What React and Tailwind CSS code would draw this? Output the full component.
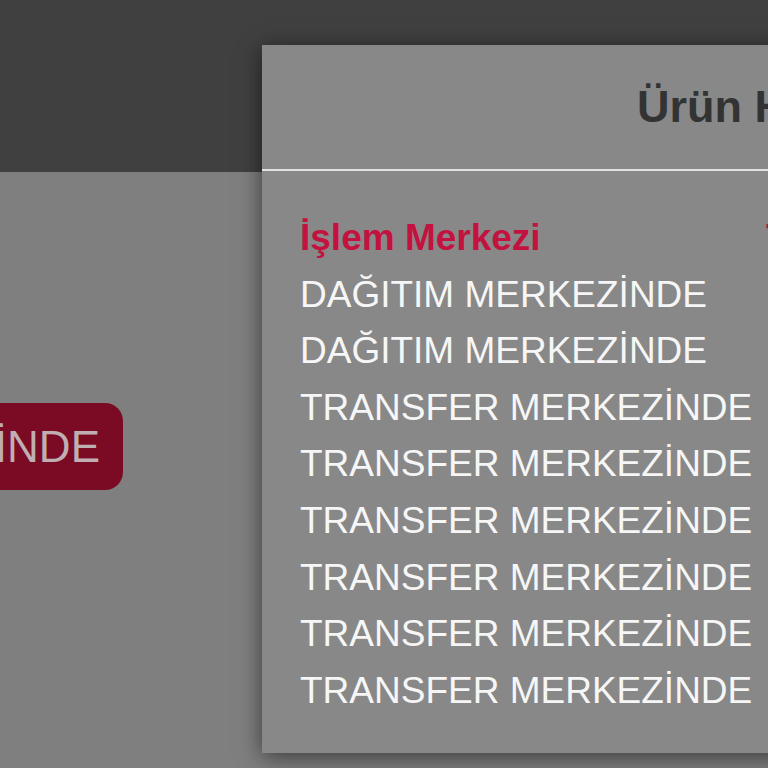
import React from 'react'

const rows = [
  'DAĞITIM MERKEZİNDE',
  'DAĞITIM MERKEZİNDE',
  'TRANSFER MERKEZİNDE',
  'TRANSFER MERKEZİNDE',
  'TRANSFER MERKEZİNDE',
  'TRANSFER MERKEZİNDE',
  'TRANSFER MERKEZİNDE',
  'TRANSFER MERKEZİNDE',
]

function StatusPill() {
  return (
    <div className="w-[123px] flex justify-end">
      <div className="shrink-0 h-[87px] flex items-center pl-6 pr-[23px] rounded-[18px] bg-[#7b0a25] text-[#bfaeb2] text-[44px] whitespace-nowrap">
        TRANSFER MERKEZİNDE
      </div>
    </div>
  )
}

function HistoryModal() {
  return (
    <div className="absolute left-[262px] top-[45px] w-[900px] h-[708px] bg-[#888888] shadow-[0_4px_22px_rgba(0,0,0,0.55)] flex flex-col">
      {/* header */}
      <div className="h-[126px] shrink-0 flex items-center pl-[375px] border-b-2 border-[#e2e2e2]">
        <h2 className="text-[45px] font-bold text-[#333333] whitespace-nowrap">Ürün Hareketleri</h2>
      </div>

      {/* body */}
      <div className="flex pt-[39px] pl-[38px] text-[37px] leading-[56.6px] whitespace-nowrap">
        <div className="w-[466px] shrink-0 flex flex-col">
          <p className="font-bold text-[#c3123f]">İşlem Merkezi</p>
          {rows.map((r, i) => (
            <p key={i} className="text-[#f6f6f6]">{r}</p>
          ))}
        </div>
        <div className="flex flex-col">
          <p className="font-bold text-[#c3123f]">Tarih</p>
        </div>
      </div>
    </div>
  )
}

export default function App() {
  return (
    <div className="relative w-[768px] h-[768px] overflow-hidden bg-[#7f7f7f] font-['Liberation_Sans',Arial,sans-serif]">
      <div className="h-[172px] bg-[#404040]" />
      <div className="pt-[231px]">
        <StatusPill />
      </div>
      <HistoryModal />
    </div>
  )
}
